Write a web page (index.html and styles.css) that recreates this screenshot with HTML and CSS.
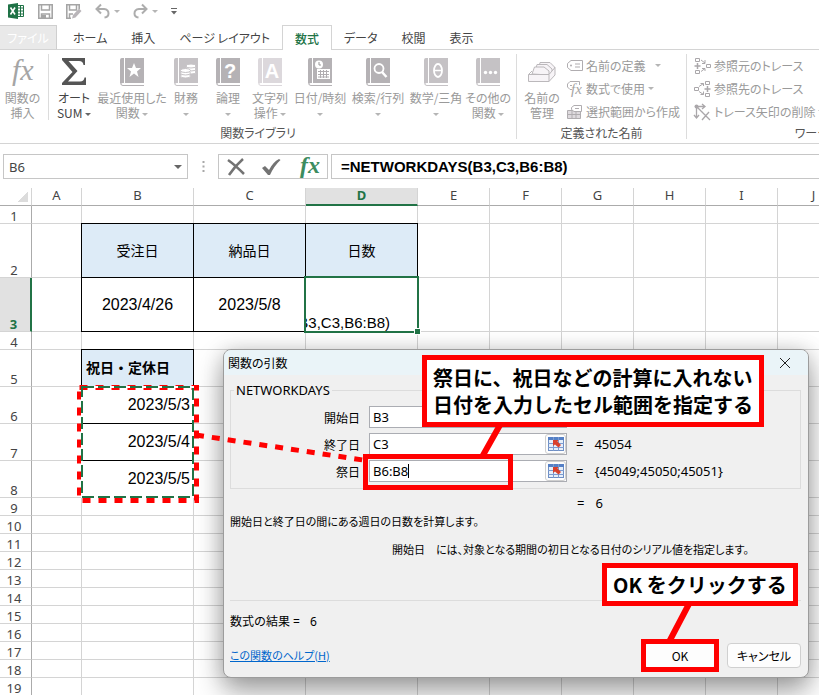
FILE: index.html
```html
<!DOCTYPE html>
<html lang="ja">
<head>
<meta charset="UTF-8">
<meta name="viewport" content="width=device-width, initial-scale=1">
<title>NETWORKDAYS</title>
<link rel="stylesheet" href="styles.css">
</head>
<body>

<!-- shared icon shapes -->
<svg class="defs" width="0" height="0" aria-hidden="true">
  <symbol id="book" viewBox="0 0 24 28">
    <path class="book-fill" d="M2 0H24V25H2.500Q1 25 1 26.500V2Z"/>
    <path class="book-fill" d="M0 2Q0 0 2 0H4V25H2Q0 25 0 27Z"/>
    <path d="M4.500 0V25" stroke="#fff"/>
    <path class="book-line" d="M1 26Q1 27.500 3 27.500H24" fill="none"/>
  </symbol>
  <symbol id="picker" viewBox="0 0 16 14">
    <rect x="0.500" y="0.500" width="15" height="13" fill="#e6effa" stroke="#6f8fc4"/>
    <rect x="0" y="0" width="16" height="3" fill="#5580c6"/>
    <path d="M0 6.500H16M0 10.500H16M5.500 0V14M10.500 0V14" stroke="#7c9bd0"/>
    <path d="M5 3H10.500L9.500 4.500L13 8L10.500 10.500L7 7.500L5 9Z" fill="#d8402c"/>
  </symbol>
</svg>

<div class="quick">
  <svg width="17" height="16" viewBox="0 0 17 16"><path d="M9 2.500H15.500V13.500H9" fill="#fff" stroke="#1f7246"/><path d="M10 5H15M10 8H15M10 11H15M12.500 3V13" stroke="#1f7246"/><path d="M0 1.500L10 0V16L0 14.500Z" fill="#1f7246"/><path d="M2.500 4.500L7 11.500M7 4.500L2.500 11.500" stroke="#fff" stroke-width="1.600"/></svg>
  <button class="quick-save" title="上書き保存"><svg width="15" height="15" viewBox="0 0 15 15"><path d="M0.800 0.800H14.200V14.200H0.800Z" fill="none" stroke="#a5a5a5" stroke-width="1.600"/><path d="M3.500 1V6H11.500V1M3.500 14V10H11.500V14" fill="none" stroke="#a5a5a5" stroke-width="1.500"/><path d="M4 11H8V14H4Z" fill="#a5a5a5"/></svg></button>
  <button class="quick-save" title="名前を付けて保存"><svg width="16" height="15" viewBox="0 0 16 15"><path d="M5 14.200H0.800V0.800H13.200V5" fill="none" stroke="#a5a5a5" stroke-width="1.600"/><path d="M3.500 1V6H10.500V1M3.500 14V10H7" fill="none" stroke="#a5a5a5" stroke-width="1.500"/><path d="M6 14.500L7 11L13 4.500L15.500 7L9.500 13.500Z" fill="#b9b5b9"/></svg></button>
  <button class="quick-undo" title="元に戻す"><svg width="15" height="15" viewBox="0 0 15 15"><path d="M6 0.500L1.500 5L6 9.500M2 5H9Q13.500 5.500 13.500 9.500Q13.500 13 9.500 13.500" fill="none" stroke="#adadad" stroke-width="2"/></svg><i class="caret"></i></button>
  <button class="quick-undo" title="やり直し"><svg width="15" height="15" viewBox="0 0 15 15"><path d="M9 0.500L13.500 5L9 9.500M13 5H6Q1.500 5.500 1.500 9.500Q1.500 13 5.500 13.500" fill="none" stroke="#adadad" stroke-width="2"/></svg><i class="caret"></i></button>
  <button class="quick-more" title="カスタマイズ"><svg width="6" height="7" viewBox="0 0 6 7"><path d="M0 0.500H6" stroke="#666"/><path d="M0 3H6L3 6.500Z" fill="#666"/></svg></button>
</div>

<nav class="tabs">
  <button class="tab file">ファイル</button>
  <button class="tab">ホーム</button>
  <button class="tab">挿入</button>
  <button class="tab">ページ レイアウト</button>
  <button class="tab active">数式</button>
  <button class="tab">データ</button>
  <button class="tab">校閲</button>
  <button class="tab">表示</button>
</nav>

<div class="ribbon">
  <section class="group library">
    <div class="tools">
      <button class="tool insert"><svg width="28" height="28" viewBox="0 0 28 28"><text class="fx" x="3" y="22">fx</text></svg><span>関数の<br>挿入</span></button>
      <button class="tool sum"><svg width="24" height="28" viewBox="0 0 24 28"><path d="M0 0H23V7H21.500Q21 3 17 3H6.500L15.500 13L6 23.500H18Q22 23.500 22.500 19.500H24V27H0V25L10.500 14L0 2Z" fill="#555"/></svg><span>オート<br>SUM <i class="caret dark"></i></span></button>
      <button class="tool wide"><svg width="24" height="28"><use href="#book"/><path d="M14 5L16 10H21L17 13.500L18.500 19L14 15.500L9.500 19L11 13.500L7 10H12Z" fill="#fff"/></svg><span>最近使用した<br>関数 <i class="caret"></i></span></button>
      <button class="tool light"><svg width="24" height="28"><use href="#book"/><g fill="#fff" stroke="#c5c2c5"><ellipse cx="17" cy="14" rx="5" ry="2"/><ellipse cx="17" cy="11" rx="5" ry="2"/><ellipse cx="17" cy="8" rx="5" ry="2"/><ellipse cx="11.500" cy="18" rx="5" ry="2"/><ellipse cx="11.500" cy="15" rx="5" ry="2"/><ellipse cx="11.500" cy="12.500" rx="5" ry="2"/></g></svg><span>財務<br><i class="caret"></i></span></button>
      <button class="tool"><svg width="24" height="28"><use href="#book"/><text class="glyph" x="14" y="20">?</text></svg><span>論理<br><i class="caret"></i></span></button>
      <button class="tool pale"><svg width="24" height="28"><use href="#book"/><text class="glyph" x="14" y="20">A</text></svg><span>文字列<br>操作 <i class="caret"></i></span></button>
      <button class="tool mid"><svg width="24" height="28"><use href="#book"/><circle cx="11" cy="6.500" r="4" fill="#fff"/><path d="M11 4V7H13" fill="none" stroke="#999"/><path d="M9 11H22V21H9Z" fill="#fff"/><path d="M10 13.500H21M10 16.500H21M10 19H21M12.500 12V20M15.500 12V20M18.500 12V20" stroke="#b0adb0"/></svg><span>日付/時刻<br><i class="caret"></i></span></button>
      <button class="tool mid"><svg width="24" height="28"><use href="#book"/><circle cx="13" cy="10.500" r="4.500" fill="none" stroke="#fff" stroke-width="1.800"/><path d="M16 14L20.500 19" stroke="#fff" stroke-width="2.500"/></svg><span>検索/行列<br><i class="caret"></i></span></button>
      <button class="tool mid light"><svg width="24" height="28"><use href="#book"/><ellipse cx="14" cy="12.500" rx="4" ry="6.500" fill="none" stroke="#fff" stroke-width="1.800"/><path d="M10 12.500H18" stroke="#fff" stroke-width="1.500"/></svg><span>数学/三角<br><i class="caret"></i></span></button>
      <button class="tool other light"><svg width="24" height="28"><use href="#book"/><g fill="#fff"><circle cx="9.500" cy="14.500" r="1.700"/><circle cx="14.500" cy="14.500" r="1.700"/><circle cx="19.500" cy="14.500" r="1.700"/></g></svg><span>その他の<br>関数 <i class="caret"></i></span></button>
    </div>
    <h2>関数ライブラリ</h2>
  </section>

  <section class="group names">
    <div class="tools">
      <button class="tool manage"><svg width="28" height="28" viewBox="0 0 28 28"><g fill="#f7f4f7" stroke="#bbb8bb"><path d="M10 14L12 4.500H22L26.500 9V15Z"/><path d="M7 14L9 6.500H19L24 11V16Z"/><path d="M4 16L6.500 9H16L21 13V17Z"/><path d="M0.500 16.500L4 13M21 16.500L27 9.500V17L21 23.500"/><path d="M0.500 16.500H21V23.500H0.500Z"/></g></svg><span>名前の<br>管理</span></button>
      <div class="stack">
        <button class="small"><svg width="16" height="16" viewBox="0 0 16 16"><path d="M4 2.500H15.500V12.500H4L0.500 9.500V5.500Z" fill="none" stroke="#b0adb0"/><path d="M8 6H13M8 9H13" stroke="#b0adb0"/><circle cx="4" cy="7.500" r="1" fill="#b0adb0"/></svg>名前の定義 <i class="caret gap"></i></button>
        <button class="small"><svg width="16" height="16" viewBox="0 0 16 16"><path d="M5 8.500H3L0.500 6V3L3 0.500H12.500V4" fill="none" stroke="#b0adb0"/><path d="M3 4.500H5" stroke="#b0adb0"/><text class="fx tiny" x="4" y="13">fx</text></svg>数式で使用 <i class="caret"></i></button>
        <button class="small"><svg width="16" height="16" viewBox="0 0 16 16"><path d="M0.500 6.500H13.500V14.500H0.500Z" fill="#dedade" stroke="#b0adb0"/><path d="M1 10.500H13M5 7V14M9 7V14" stroke="#b0adb0"/><path d="M7 1.500H14.500V7.500H7L4.500 5.500V3.500Z" fill="#fff" stroke="#b0adb0"/><path d="M8 4.500H12" stroke="#b0adb0"/></svg>選択範囲から作成</button>
      </div>
    </div>
    <h2>定義された名前</h2>
  </section>

  <section class="group trace">
    <div class="tools">
      <div class="stack">
        <button class="small"><svg width="17" height="16" viewBox="0 0 17 16"><g fill="none" stroke="#aaa7aa"><path d="M1.500 0.500H5.500V3.500H1.500ZM1.500 12.500H5.500V15.500H1.500ZM12.500 6.500H16.500V9.500H12.500Z"/><path d="M3.500 5V11M0.500 8H6.500" stroke-width="1.500"/><path d="M7 2L11 5M11 2V5.500H8M7 13.500L11 10.500M8 10.500H11V13"/></g></svg>参照元のトレース</button>
        <button class="small"><svg width="17" height="16" viewBox="0 0 17 16"><g fill="none" stroke="#aaa7aa"><path d="M0.500 6.500H4.500V9.500H0.500ZM11.500 0.500H15.500V3.500H11.500ZM11.500 12.500H15.500V15.500H11.500Z"/><path d="M13.500 5V11M10.500 8H16.500" stroke-width="1.500"/><path d="M5 5.500L9.500 2.500M6.500 2.500H9.500V5M5 10.500L9.500 13.500M9.500 10.500V13.500H6.500"/></g></svg>参照先のトレース</button>
        <button class="small"><svg width="17" height="16" viewBox="0 0 17 16"><path d="M2.500 2V14M0 11L2.500 14L5 11M2 2.500H10M8 0L11 2.500L8 5M3 3L9 9M8 8L16 16M15 8L8 16" fill="none" stroke="#aaa7aa" stroke-width="1.300"/><circle cx="2.500" cy="2.500" r="2" fill="#aaa7aa"/></svg>トレース矢印の削除 <i class="caret"></i></button>
      </div>
    </div>
    <h2>ワークシート分析</h2>
  </section>
</div>

<div class="formula-bar">
  <div class="name-box">
    <input type="text" value="B6" aria-label="名前ボックス">
    <i class="caret dark"></i>
  </div>
  <svg class="dots" width="3" height="12" viewBox="0 0 3 12"><path d="M0.500 1H2.500M0.500 5.500H2.500M0.500 10H2.500" stroke="#a8a8a8" stroke-width="2"/></svg>
  <div class="edit-buttons">
    <button title="キャンセル"><svg width="18" height="18" viewBox="0 0 18 18"><path d="M1 2Q8 7 17 16M16 1Q8 8 2 17" fill="none" stroke="#737373" stroke-width="2.500"/></svg></button>
    <button title="入力"><svg width="20" height="18" viewBox="0 0 20 18"><path d="M1 10L4 8L8 12Q12 4 18 1L19.500 2Q13 8 9 17H7Z" fill="#737373"/></svg></button>
    <button title="関数の挿入"><svg width="22" height="23" viewBox="0 0 22 23"><text class="fx green" x="3" y="18">fx</text></svg></button>
  </div>
  <input class="formula" type="text" value="=NETWORKDAYS(B3,C3,B6:B8)" aria-label="数式バー">
</div>

<main class="sheet">
<table class="grid">
  <colgroup><col class="w-head"><col class="w-a"><col class="w-b"><col class="w-b"><col class="w-b"><col class="w-e"><col class="w-e"><col class="w-e"><col class="w-e"><col class="w-e"><col class="w-e"></colgroup>
  <thead>
    <tr><th class="corner"></th><th>A</th><th>B</th><th>C</th><th class="on">D</th><th>E</th><th>F</th><th>G</th><th>H</th><th>I</th><th>J</th></tr>
  </thead>
  <tbody>
    <tr><th>1</th><td></td><td></td><td></td><td></td><td></td><td></td><td></td><td></td><td></td><td></td></tr>
    <tr class="tall"><th>2</th><td></td><td class="box head">受注日</td><td class="box head">納品日</td><td class="box head">日数</td><td></td><td></td><td></td><td></td><td></td><td></td></tr>
    <tr class="tall"><th class="on">3</th><td></td><td class="box">2023/4/26</td><td class="box">2023/5/8</td><td class="box editing"><div class="edit-text">B3,C3,B6:B8)</div></td><td></td><td></td><td></td><td></td><td></td><td></td></tr>
    <tr><th>4</th><td></td><td></td><td></td><td></td><td></td><td></td><td></td><td></td><td></td><td></td></tr>
    <tr class="mid"><th>5</th><td></td><td class="box head left">祝日・定休日</td><td></td><td></td><td></td><td></td><td></td><td></td><td></td><td></td></tr>
    <tr class="mid"><th>6</th><td></td><td class="box right">2023/5/3</td><td></td><td></td><td></td><td></td><td></td><td></td><td></td><td></td></tr>
    <tr class="mid"><th>7</th><td></td><td class="box right">2023/5/4</td><td></td><td></td><td></td><td></td><td></td><td></td><td></td><td></td></tr>
    <tr class="mid"><th>8</th><td></td><td class="box right">2023/5/5</td><td></td><td></td><td></td><td></td><td></td><td></td><td></td><td></td></tr>
    <tr><th>9</th><td></td><td></td><td></td><td></td><td></td><td></td><td></td><td></td><td></td><td></td></tr>
    <tr><th>10</th><td></td><td></td><td></td><td></td><td></td><td></td><td></td><td></td><td></td><td></td></tr>
    <tr><th>11</th><td></td><td></td><td></td><td></td><td></td><td></td><td></td><td></td><td></td><td></td></tr>
    <tr><th>12</th><td></td><td></td><td></td><td></td><td></td><td></td><td></td><td></td><td></td><td></td></tr>
    <tr><th>13</th><td></td><td></td><td></td><td></td><td></td><td></td><td></td><td></td><td></td><td></td></tr>
    <tr><th>14</th><td></td><td></td><td></td><td></td><td></td><td></td><td></td><td></td><td></td><td></td></tr>
    <tr><th>15</th><td></td><td></td><td></td><td></td><td></td><td></td><td></td><td></td><td></td><td></td></tr>
    <tr><th>16</th><td></td><td></td><td></td><td></td><td></td><td></td><td></td><td></td><td></td><td></td></tr>
    <tr><th>17</th><td></td><td></td><td></td><td></td><td></td><td></td><td></td><td></td><td></td><td></td></tr>
    <tr><th>18</th><td></td><td></td><td></td><td></td><td></td><td></td><td></td><td></td><td></td><td></td></tr>
    <tr><th>19</th><td></td><td></td><td></td><td></td><td></td><td></td><td></td><td></td><td></td><td></td></tr>
  </tbody>
</table>
</main>

<div class="dialog" role="dialog" aria-labelledby="dialog-title">
  <header>
    <span id="dialog-title">関数の引数</span>
    <button class="close" title="閉じる"><svg width="10" height="10" viewBox="0 0 10 10"><path d="M0 0L10 10M10 0L0 10" stroke="#222"/></svg></button>
  </header>
  <fieldset>
    <legend>NETWORKDAYS</legend>
    <label for="arg1">開始日</label>
    <div class="field"><input id="arg1" type="text" value="B3"><button title="範囲選択"><svg width="16" height="14"><use href="#picker"/></svg></button></div>
    <output></output>
    <label for="arg2">終了日</label>
    <div class="field"><input id="arg2" type="text" value="C3"><button title="範囲選択"><svg width="16" height="14"><use href="#picker"/></svg></button></div>
    <output>= <b>45054</b></output>
    <label for="arg3">祭日</label>
    <div class="field"><input id="arg3" type="text" value="B6:B8"><button title="範囲選択"><svg width="16" height="14"><use href="#picker"/></svg></button></div>
    <output>= <b>{45049;45050;45051}</b></output>
  </fieldset>
  <div class="total"><output>= <b>6</b></output></div>
  <p>開始日と終了日の間にある週日の日数を計算します。</p>
  <p class="arg-help"><span>開始日</span><span>には、対象となる期間の初日となる日付のシリアル値を指定します。</span></p>
  <div class="result">数式の結果 =<b>6</b></div>
  <footer>
    <a href="#">この関数のヘルプ(H)</a>
    <button class="push">OK</button>
    <button class="push">キャンセル</button>
  </footer>
</div>

<!-- tutorial marks over the screen -->
<svg class="marks" width="819" height="695" viewBox="0 0 819 695" aria-hidden="true">
  <rect class="dash" x="79.500" y="387.500" width="117" height="113"/>
  <rect class="ants-base" x="82" y="387" width="111" height="110"/>
  <rect class="ants" x="82" y="387" width="111" height="110"/>
  <path class="dash" d="M196 435L363 460"/>
  <path class="ink" d="M408.500 464V478"/>
  <path class="line" d="M500 425L482 457M690 602L669 642"/>
  <rect class="frame" x="365.500" y="456.500" width="145" height="31"/>
  <rect class="frame" x="643.500" y="641.500" width="73" height="28"/>
</svg>
<div class="callout holidays">祭日に、祝日などの計算に入れない<br>日付を入力したセル範囲を指定する</div>
<div class="callout press-ok">OK をクリックする</div>

</body>
</html>
```
FILE: styles.css
```css
* {
  box-sizing: border-box;
}
body {
  margin: 0;
  height: 100vh;
  overflow: hidden;
  position: relative;
  background: #fff;
  color: #444;
  font: 12px/15px "Noto Sans CJK JP", sans-serif;
  font-feature-settings: "palt";
}
button, input {
  font: inherit;
  font-feature-settings: inherit;
  color: inherit;
  background: none;
  border: 0;
  padding: 0;
  margin: 0;
}
input {
  outline: 0;
  min-width: 0;
}
svg {
  overflow: visible;
}
.defs {
  position: absolute;
}
.caret {
  display: inline-block;
  border: 3px solid transparent;
  border-top-color: #b5b5b5;
  border-bottom-width: 0;
  vertical-align: middle;
}
.caret.dark {
  border-top-color: #666;
}
.caret.gap {
  margin-left: 6px;
}

/* quick access bar */
.quick {
  display: flex;
  align-items: center;
  gap: 13px;
  height: 25px;
  padding: 0 8px 3px;
}
.quick button {
  display: flex;
  align-items: center;
  gap: 4px;
}

/* ribbon tabs */
.tabs {
  display: flex;
  height: 25px;
  border-bottom: 1px solid #d4d4d4;
}
.tab {
  padding: 0 12px;
  height: 24px;
}
.tab.file {
  width: 57px;
  padding: 0;
  margin-right: 4px;
  background: #e9e9e9;
  border: 1px solid #cfcfcf;
  border-width: 1px 1px 0 0;
  color: #fff;
}
.tab.active {
  height: 25px;
  background: #fff;
  border: 1px solid #d4d4d4;
  border-bottom: 0;
  color: #217346;
  font-weight: 500;
}

/* ribbon body */
.ribbon {
  display: flex;
  height: 94px;
  padding: 4px 0;
  border-bottom: 1px solid #d4d4d4;
  overflow: hidden;
}
.group {
  display: flex;
  flex-direction: column;
  justify-content: space-between;
  flex: none;
  border-right: 1px solid #dcdcdc;
}
.group h2 {
  margin: 0;
  font-size: 12px;
  line-height: 12px;
  font-weight: 400;
  text-align: center;
  color: #555;
}
.library {
  width: 517px;
}
.names {
  width: 170px;
}
.trace {
  width: 310px;
}
.trace h2 {
  padding-right: 4px;
}
.tools {
  display: flex;
}
.tool {
  width: 42px;
  padding-top: 4px;
  color: #9a9a9a;
  white-space: nowrap;
  display: flex;
  flex-direction: column;
  align-items: center;
  gap: 4px;
}
.tool svg {
  display: block;
}
.insert {
  width: 49px;
  padding-right: 3px;
  border-right: 1px solid #dcdcdc;
}
.sum {
  width: 50px;
  color: #444;
}
.wide {
  width: 66px;
}
.mid.tool {
  width: 58px;
}
.other {
  width: 46px;
}
.manage {
  width: 50px;
}
.tool {
  --book: #b5b2b5;
}
.tool.light {
  --book: #c5c2c5;
}
.tool.pale {
  --book: #dcd8dc;
}
.book-fill {
  fill: var(--book);
}
.book-line {
  stroke: var(--book);
}
.tool .glyph {
  fill: #fff;
  font: bold 20px "Liberation Sans", sans-serif;
  text-anchor: middle;
}
.fx {
  font: italic 30px "Liberation Serif", serif;
  fill: #a5a5a5;
}
.fx.tiny {
  font-size: 15px;
}
.fx.green {
  font-size: 24px;
  font-weight: bold;
  fill: #3c8c5f;
}
.stack {
  display: flex;
  flex-direction: column;
}
.small {
  display: flex;
  align-items: center;
  gap: 3px;
  height: 23px;
  color: #9a9a9a;
  white-space: nowrap;
}
.trace .stack {
  padding-left: 7px;
}

/* formula bar */
.formula-bar {
  display: flex;
  align-items: center;
  height: 25px;
  margin: 10px 0 9px 3px;
}
.name-box, .edit-buttons, .formula {
  height: 25px;
  border: 1px solid #c6c6c6;
}
.name-box {
  display: flex;
  align-items: center;
  width: 185px;
  padding: 0 5px;
  font: 13px "Noto Sans", sans-serif;
}
.name-box input {
  flex: 1;
}
.name-box .caret {
  border-width: 4px 4px 0;
}
.dots {
  margin: 0 13px 0 14px;
}
.edit-buttons {
  display: flex;
  align-items: center;
  justify-content: space-around;
  width: 110px;
  margin-right: 3px;
}
.edit-buttons svg {
  display: block;
}
.formula {
  flex: 1;
  border-right: 0;
  padding: 0 9px;
  color: #000;
  font: bold 15px "Liberation Sans", sans-serif;
}

/* sheet */
.sheet {
  overflow: hidden;
}
.grid {
  width: 850px;
  table-layout: fixed;
  border-collapse: separate;
  border-spacing: 0;
}
.w-head {
  width: 32px;
}
.w-a {
  width: 50px;
}
.w-b {
  width: 112px;
}
.w-e {
  width: 72px;
}
.grid th, .grid td {
  height: 18px;
  padding: 0;
  border: solid #d4d4d4;
  border-width: 0 1px 1px 0;
}
.grid th {
  font: 13px/14px "Noto Sans", sans-serif;
  vertical-align: bottom;
}
.grid thead th {
  border-bottom-color: #ababab;
  vertical-align: top;
}
.grid tbody th {
  border-right-color: #ababab;
  padding-right: 3px;
}
.grid .corner {
  background: linear-gradient(135deg, transparent 50%, #dcdcdc 50%) no-repeat 18px 4px / 10px 10px;
}
.grid th.on {
  background: #e1e1e1;
  color: #217346;
  font-weight: bold;
}
.grid thead th.on {
  border-bottom: 2px solid #217346;
}
.grid tbody th.on {
  border-right: 2px solid #217346;
}
.grid .tall td {
  height: 54px;
}
.grid .mid td {
  height: 37px;
}
.grid td {
  color: #000;
  font: 16px/18px "Liberation Sans", "Noto Sans CJK JP", sans-serif;
  text-align: center;
}
.grid td.box {
  border-color: #000;
  box-shadow: -1px 0 #000, 0 -1px #000, -1px -1px #000;
}
.grid td.head {
  background: #ddebf7;
  font-size: 14px;
}
.grid td.left {
  padding-left: 4px;
  text-align: left;
  font-weight: bold;
}
.grid td.right {
  padding-right: 3px;
  text-align: right;
}
.grid td.editing {
  position: relative;
  vertical-align: bottom;
  text-align: left;
}
.editing::before {
  content: "";
  position: absolute;
  inset: -2px;
  border: 2px solid #217346;
}
.editing::after {
  content: "";
  position: absolute;
  right: -3px;
  bottom: -3px;
  width: 5px;
  height: 5px;
  background: #217346;
  outline: 1px solid #fff;
}
.edit-text {
  display: flex;
  justify-content: flex-end;
  width: 84px;
  overflow: hidden;
  font-size: 15px;
  line-height: 16px;
}

/* function arguments window */
.dialog {
  position: absolute;
  left: 223px;
  top: 349px;
  width: 586px;
  border: 1px solid #9c9c9c;
  border-radius: 8px;
  background: #f0f0f0;
  color: #000;
  box-shadow: 0 14px 28px rgba(0, 0, 0, .35), 0 0 20px rgba(0, 0, 0, .15);
}
.dialog header {
  display: flex;
  justify-content: space-between;
  align-items: center;
  height: 25px;
  padding: 0 18px 0 4px;
  border-radius: 7px 7px 0 0;
  background: #eaf4f8;
}
.close svg {
  display: block;
}
.dialog b {
  font-weight: 400;
}
fieldset {
  display: grid;
  grid-template-columns: 129px 198px 1fr;
  column-gap: 9px;
  row-gap: 5px;
  align-items: center;
  margin: 8px 7px 0 6px;
  padding: 9px 0 6px;
  border: 1px solid #dcdcdc;
}
legend {
  margin-left: 3px;
  padding: 0 2px;
  font: 13px/14px "Noto Sans", sans-serif;
}
fieldset label {
  text-align: right;
}
.field {
  display: flex;
  height: 22px;
  border: 1px solid #abadb3;
  background: #fff;
  font: 13px "Noto Sans", sans-serif;
}
.field input {
  flex: 1;
  padding-left: 3px;
}
.field button {
  width: 21px;
  border: 1px solid #cfcfcf;
  border-radius: 3px;
  background: #fdfdfd;
}
.field svg {
  display: block;
  margin: auto;
}
.dialog output {
  display: flex;
  gap: 11px;
  font: 13px/18px "Noto Sans", sans-serif;
}
.total {
  padding: 5px 0 0 353px;
}
.dialog p {
  margin: 0 6px;
  font-size: 11px;
  line-height: 18px;
}
.dialog p.arg-help {
  display: flex;
  gap: 11px;
  margin: 10px 6px 0 168px;
}
.result {
  display: flex;
  gap: 10px;
  margin: 42px 7px 0 6px;
  padding-top: 12px;
  border-top: 1px solid #dcdcdc;
  font: 12px/18px "Noto Sans", "Noto Sans CJK JP", sans-serif;
}
.dialog footer {
  display: flex;
  align-items: center;
  gap: 10px;
  padding: 12px 7px 9px 6px;
}
.dialog footer a {
  margin-right: auto;
  color: #0066cc;
  font-size: 11px;
}
.push {
  width: 74px;
  height: 25px;
  border: 1px solid #d0d0d0;
  border-radius: 4px;
  background: #fdfdfd;
}

/* red marks */
.marks {
  position: absolute;
  left: 0;
  top: 0;
  fill: none;
  pointer-events: none;
}
.ants-base {
  stroke: #fff;
  stroke-width: 2;
}
.ants {
  stroke: #217346;
  stroke-width: 2;
  stroke-dasharray: 12 4;
}
.dash {
  stroke: #f00;
  stroke-width: 5;
  stroke-dasharray: 8 8;
}
.line {
  stroke: #f00;
  stroke-width: 6;
}
.frame {
  stroke: #f00;
  stroke-width: 5;
}
.ink {
  stroke: #000;
}
.callout {
  position: absolute;
  padding: 3px 6px;
  border: 5px solid #f00;
  background: #fff;
  color: #000;
  font-size: 20px;
  line-height: 27px;
  font-weight: bold;
  font-feature-settings: normal;
  white-space: nowrap;
}
.holidays {
  left: 422px;
  top: 355px;
  padding: 4px 6px;
}
.press-ok {
  left: 602px;
  top: 563px;
}
```
